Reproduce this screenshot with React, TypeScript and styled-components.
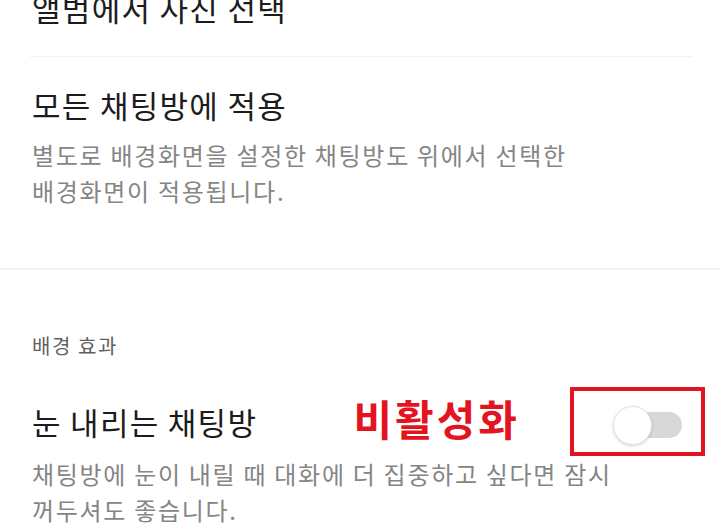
import React from "react";
import styled, { createGlobalStyle } from "styled-components";

const GlobalStyle = createGlobalStyle`
  html, body {
    margin: 0;
    padding: 0;
    background: #ffffff;
  }
  body {
    font-family: "Noto Sans CJK KR", "Noto Sans", Roboto, sans-serif;
    -webkit-font-smoothing: antialiased;
  }
  #root {
    width: 720px;
    height: 530px;
    overflow: hidden;
  }
`;

const Page = styled.div`
  display: flex;
  flex-direction: column;
  width: 720px;
  background: #ffffff;
`;

const Item = styled.div<{ $top?: number; $bottom?: number; $lead?: number }>`
  display: flex;
  flex-direction: column;
  margin-top: ${(p) => p.$lead ?? 0}px;
  padding: ${(p) => p.$top ?? 0}px 15px ${(p) => p.$bottom ?? 0}px 32px;
`;

const Title = styled.div`
  font-size: 31px;
  line-height: 40px;
  color: #1c1c1c;
  letter-spacing: 1.3px;
  white-space: nowrap;
`;

const Desc = styled.div<{ $gap?: number }>`
  margin-top: ${(p) => p.$gap ?? 12}px;
  font-size: 24px;
  line-height: 36px;
  color: #858585;
  letter-spacing: 1.7px;
  white-space: nowrap;
`;

const InsetDivider = styled.div`
  height: 1px;
  margin: 0 28px 0 30px;
  background: #f1f1f1;
`;

const SectionDivider = styled.div`
  height: 2px;
  background: #f1f1f1;
`;

const SectionLabel = styled.div`
  padding: 62px 32px 27px;
  font-size: 20px;
  line-height: 28px;
  letter-spacing: 1.6px;
  color: #5f5f5f;
`;

const Row = styled.div`
  display: flex;
  align-items: center;
`;

const RowTitle = styled(Title)`
  flex: 1;
`;

const Annotation = styled.span`
  margin-right: 50px;
  font-size: 42px;
  line-height: 48px;
  font-weight: 700;
  letter-spacing: 3px;
  color: #e3141f;
  white-space: nowrap;
  transform: translateY(-4px);
`;

const Highlight = styled.div`
  box-sizing: border-box;
  width: 135px;
  height: 69px;
  border: 4px solid #e3141f;
  display: flex;
  align-items: center;
  justify-content: flex-end;
  padding: 7px 19px 0 0;
`;

const Switch = styled.div`
  position: relative;
  width: 69px;
  height: 38px;
`;

const Track = styled.div`
  position: absolute;
  left: 10px;
  right: 0;
  top: 6px;
  height: 26px;
  border-radius: 13px;
  background: #d8d8d8;
`;

const Knob = styled.div`
  position: absolute;
  left: 0;
  top: 0;
  width: 39px;
  height: 39px;
  box-sizing: border-box;
  border-radius: 50%;
  background: #ffffff;
  border: 1px solid #e4e4e4;
  box-shadow: 0 1px 3px rgba(0, 0, 0, 0.18);
`;

export default function App() {
  return (
    <>
      <GlobalStyle />
      <Page>
        <Item $lead={-12} $bottom={28}>
          <Title>앨범에서 사진 선택</Title>
        </Item>
        <InsetDivider />
        <Item $top={28} $bottom={59}>
          <Title>모든 채팅방에 적용</Title>
          <Desc>
            별도로 배경화면을 설정한 채팅방도 위에서 선택한
            <br />
            배경화면이 적용됩니다.
          </Desc>
        </Item>
        <SectionDivider />
        <SectionLabel>배경 효과</SectionLabel>
        <Item>
          <Row>
            <RowTitle>눈 내리는 채팅방</RowTitle>
            <Annotation>비활성화</Annotation>
            <Highlight>
              <Switch>
                <Track />
                <Knob />
              </Switch>
            </Highlight>
          </Row>
          <Desc $gap={0}>
            채팅방에 눈이 내릴 때 대화에 더 집중하고 싶다면 잠시
            <br />
            꺼두셔도 좋습니다.
          </Desc>
        </Item>
      </Page>
    </>
  );
}
